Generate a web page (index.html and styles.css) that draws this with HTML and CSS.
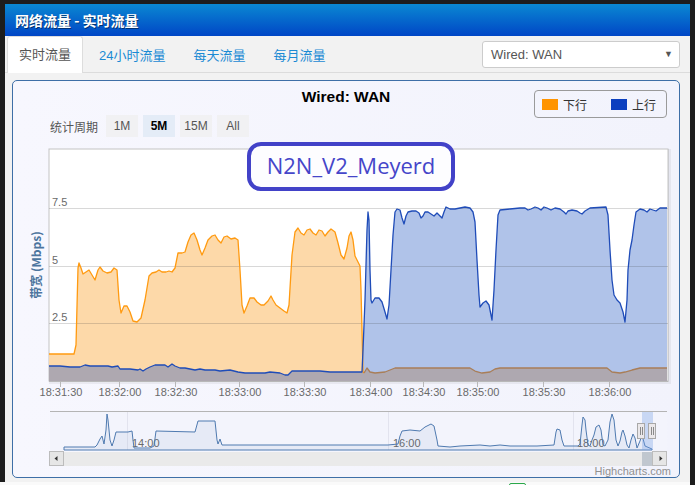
FILE: index.html
```html
<!DOCTYPE html>
<html lang="zh-CN">
<head>
<meta charset="utf-8">
<title>网络流量 - 实时流量</title>
<link rel="stylesheet" href="styles.css">
</head>
<body>
<div class="panel">
  <div class="header">网络流量 - 实时流量</div>
  <div class="tabbar">
    <div class="tab active">实时流量</div>
    <div class="tab">24小时流量</div>
    <div class="tab">每天流量</div>
    <div class="tab">每月流量</div>
    <div class="select"><span>Wired: WAN</span><span class="caret">▼</span></div>
  </div>
  <div class="chartbox">
    <div class="chart-top">
      <div></div>
      <div class="chart-title">Wired: WAN</div>
      <div class="legend">
        <span class="sw sw-down"></span><span class="lg-text">下行</span>
        <span class="sw sw-up"></span><span class="lg-text">上行</span>
      </div>
    </div>
    <div class="period">
      <span class="period-label">统计周期</span>
      <span class="pbtn">1M</span>
      <span class="pbtn sel">5M</span>
      <span class="pbtn">15M</span>
      <span class="pbtn">All</span>
    </div>
    <svg class="plot" width="666" height="340" viewBox="0 0 666 340" xmlns="http://www.w3.org/2000/svg">
      <g transform="translate(-13,-137)">
        <!-- plot shadow -->
        <rect x="50.5" y="150.5" width="619" height="232" fill="none" stroke="rgba(0,0,0,0.05)" stroke-width="3"/>
        <rect x="49.5" y="149.5" width="619" height="232" fill="none" stroke="rgba(0,0,0,0.08)" stroke-width="1"/>
        <rect x="49" y="149" width="619" height="232" fill="#ffffff" stroke="#c4c4c4" stroke-width="1"/>
        <!-- areas -->
        <path fill="#fdd9a9" d="M49,381 L49,354 L74,354 L76,345 L78,268 L79,263 L81,268 L83,274 L86,272 L89,270 L92,275 L95,280 L98,270 L100,267 L103,271 L107,273 L111,272 L114,268 L117,270 L119,300 L121,313 L124,306 L127,306 L130,312 L133,321 L137,322 L141,318 L145,300 L149,276 L152,273 L156,272 L159,270 L162,272 L166,272 L169,271 L172,272 L175,268 L178,253 L182,253 L185,252 L188,242 L191,235 L194,233 L197,240 L200,250 L202,255 L205,248 L208,240 L212,236 L215,235 L218,240 L221,243 L224,237 L227,236 L231,239 L235,238 L238,240 L240,270 L242,305 L244,313 L247,306 L250,298 L254,298 L257,302 L261,305 L264,305 L268,301 L271,296 L273,300 L276,305 L280,308 L284,311 L287,313 L289,305 L292,255 L295,232 L298,228 L301,233 L304,235 L307,230 L310,229 L313,233 L316,235 L319,230 L322,231 L325,236 L328,232 L331,229 L335,232 L338,243 L341,255 L344,259 L347,248 L349,236 L351,232 L353,240 L355,256 L358,262 L360,266 L361,290 L362,330 L363,372 L364,381 Z"/>
        <path fill="#b0c3e9" d="M362,381 L362,372 L363,350 L365,300 L367,230 L368,212 L369,220 L370,270 L371,300 L372,303 L375,298 L379,298 L382,302 L385,312 L387,319 L389,305 L391,270 L393,235 L395,212 L397,209 L400,210 L402,218 L404,224 L406,216 L408,212 L412,211 L416,211 L419,213 L421,218 L423,216 L425,212 L428,212 L431,214 L434,216 L437,213 L440,216 L442,218 L444,212 L446,207 L450,209 L455,209 L460,208 L465,207 L470,208 L473,212 L475,222 L477,260 L479,295 L480,307 L483,303 L486,301 L489,305 L491,315 L492,320 L494,290 L496,250 L498,215 L500,210 L510,209 L520,208 L525,208 L528,210 L531,209 L535,207 L538,208 L541,210 L544,207 L547,208 L551,210 L555,208 L560,209 L564,212 L566,214 L568,211 L572,210 L577,211 L580,213 L582,214 L585,211 L590,208 L606,207 L608,215 L610,250 L612,280 L614,295 L617,300 L620,303 L623,312 L625,322 L627,300 L628,270 L630,250 L632,240 L634,225 L636,212 L640,209 L644,210 L647,212 L650,209 L653,210 L656,211 L660,208 L663,208 L667,208 L667,381 Z"/>
        <path fill="#aea8b0" d="M49,381 L49,366 L60,366 L70,367 L80,367 L85,365 L90,366 L100,366 L108,366 L112,367 L118,366 L120,369 L125,369 L130,369 L138,370 L140,369 L143,371 L146,369 L150,367 L155,365 L160,365 L165,365 L168,367 L172,364 L175,366 L180,368 L185,368 L190,369 L195,370 L200,369 L205,370 L215,370 L220,371 L230,370 L238,372 L245,373 L265,373 L270,372 L280,373 L285,375 L288,375 L292,371 L320,371 L330,372 L362,372 L364,373 L367,368 L370,372 L375,373 L385,372 L390,370 L395,368 L470,368 L475,371 L482,373 L490,372 L495,369 L500,368 L607,368 L612,372 L620,373 L625,372 L632,370 L640,368 L667,368 L667,381 Z"/>
        <!-- grid -->
        <g stroke="rgba(60,60,60,0.2)" stroke-width="1">
          <line x1="49" y1="208.5" x2="668" y2="208.5"/>
          <line x1="49" y1="266.5" x2="668" y2="266.5"/>
          <line x1="49" y1="323.5" x2="668" y2="323.5"/>
        </g>
        <!-- lines -->
        <path fill="none" stroke="#ff9a10" stroke-width="1.3" stroke-linejoin="round" d="M49,354 L74,354 L76,345 L78,268 L79,263 L81,268 L83,274 L86,272 L89,270 L92,275 L95,280 L98,270 L100,267 L103,271 L107,273 L111,272 L114,268 L117,270 L119,300 L121,313 L124,306 L127,306 L130,312 L133,321 L137,322 L141,318 L145,300 L149,276 L152,273 L156,272 L159,270 L162,272 L166,272 L169,271 L172,272 L175,268 L178,253 L182,253 L185,252 L188,242 L191,235 L194,233 L197,240 L200,250 L202,255 L205,248 L208,240 L212,236 L215,235 L218,240 L221,243 L224,237 L227,236 L231,239 L235,238 L238,240 L240,270 L242,305 L244,313 L247,306 L250,298 L254,298 L257,302 L261,305 L264,305 L268,301 L271,296 L273,300 L276,305 L280,308 L284,311 L287,313 L289,305 L292,255 L295,232 L298,228 L301,233 L304,235 L307,230 L310,229 L313,233 L316,235 L319,230 L322,231 L325,236 L328,232 L331,229 L335,232 L338,243 L341,255 L344,259 L347,248 L349,236 L351,232 L353,240 L355,256 L358,262 L360,266 L361,290 L362,330 L363,372 L364,373"/>
        <path fill="none" stroke="#a97e58" stroke-width="1.3" stroke-linejoin="round" d="M364,373 L367,368 L370,372 L375,373 L385,372 L390,370 L395,368 L470,368 L475,371 L482,373 L490,372 L495,369 L500,368 L607,368 L612,372 L620,373 L625,372 L632,370 L640,368 L667,368"/>
        <path fill="none" stroke="#1f4cb8" stroke-width="1.3" stroke-linejoin="round" d="M49,366 L60,366 L70,367 L80,367 L85,365 L90,366 L100,366 L108,366 L112,367 L118,366 L120,369 L125,369 L130,369 L138,370 L140,369 L143,371 L146,369 L150,367 L155,365 L160,365 L165,365 L168,367 L172,364 L175,366 L180,368 L185,368 L190,369 L195,370 L200,369 L205,370 L215,370 L220,371 L230,370 L238,372 L245,373 L265,373 L270,372 L280,373 L285,375 L288,375 L292,371 L320,371 L330,372 L362,372 L363,350 L365,300 L367,230 L368,212 L369,220 L370,270 L371,300 L372,303 L375,298 L379,298 L382,302 L385,312 L387,319 L389,305 L391,270 L393,235 L395,212 L397,209 L400,210 L402,218 L404,224 L406,216 L408,212 L412,211 L416,211 L419,213 L421,218 L423,216 L425,212 L428,212 L431,214 L434,216 L437,213 L440,216 L442,218 L444,212 L446,207 L450,209 L455,209 L460,208 L465,207 L470,208 L473,212 L475,222 L477,260 L479,295 L480,307 L483,303 L486,301 L489,305 L491,315 L492,320 L494,290 L496,250 L498,215 L500,210 L510,209 L520,208 L525,208 L528,210 L531,209 L535,207 L538,208 L541,210 L544,207 L547,208 L551,210 L555,208 L560,209 L564,212 L566,214 L568,211 L572,210 L577,211 L580,213 L582,214 L585,211 L590,208 L606,207 L608,215 L610,250 L612,280 L614,295 L617,300 L620,303 L623,312 L625,322 L627,300 L628,270 L630,250 L632,240 L634,225 L636,212 L640,209 L644,210 L647,212 L650,209 L653,210 L656,211 L660,208 L663,208 L667,208"/>
        <!-- axis -->
        <line x1="49" y1="381.5" x2="668" y2="381.5" stroke="#b8b8b8"/>
        <g stroke="#b8b8b8">
          <line x1="60.5" y1="382" x2="60.5" y2="387"/>
          <line x1="119.5" y1="382" x2="119.5" y2="387"/>
          <line x1="175.5" y1="382" x2="175.5" y2="387"/>
          <line x1="239.5" y1="382" x2="239.5" y2="387"/>
          <line x1="304.5" y1="382" x2="304.5" y2="387"/>
          <line x1="370.5" y1="382" x2="370.5" y2="387"/>
          <line x1="423.5" y1="382" x2="423.5" y2="387"/>
          <line x1="477.5" y1="382" x2="477.5" y2="387"/>
          <line x1="543.5" y1="382" x2="543.5" y2="387"/>
          <line x1="609.5" y1="382" x2="609.5" y2="387"/>
        </g>
        <g class="xlab" text-anchor="middle">
          <text x="61" y="396">18:31:30</text>
          <text x="120" y="396">18:32:00</text>
          <text x="176" y="396">18:32:30</text>
          <text x="240" y="396">18:33:00</text>
          <text x="305" y="396">18:33:30</text>
          <text x="371" y="396">18:34:00</text>
          <text x="424" y="396">18:34:30</text>
          <text x="478" y="396">18:35:00</text>
          <text x="544" y="396">18:35:30</text>
          <text x="610" y="396">18:36:00</text>
        </g>
        <g class="ylab">
          <text x="52" y="206">7.5</text>
          <text x="52" y="264">5</text>
          <text x="52" y="321">2.5</text>
        </g>
        <text class="ytitle" transform="translate(41,265) rotate(-90)" text-anchor="middle">带宽 (Mbps)</text>
        <!-- navigator -->
        <rect x="50" y="412" width="617" height="38" fill="#f3f4fc"/>
        <g stroke="#e2e3ee">
          <line x1="127.5" y1="412" x2="127.5" y2="450"/>
          <line x1="388.5" y1="412" x2="388.5" y2="450"/>
          <line x1="573.5" y1="412" x2="573.5" y2="450"/>
        </g>
        <g class="navlab">
          <text x="132" y="447">14:00</text>
          <text x="393" y="447">16:00</text>
          <text x="577" y="447">18:00</text>
        </g>
        <path fill="rgba(69,114,167,0.07)" stroke="#4f7ab0" stroke-width="1" stroke-linejoin="round" d="M64,450 L64,447 L95,447 L97,445 L100,439 L102,436 L104,444 L106,430 L107,414 L108,420 L110,440 L112,446 L114,440 L116,432 L128,432 L132,431 L133,440 L134,448 L150,448 L154,446 L156,431 L195,432 L198,421 L215,421 L217,440 L218,444 L220,439 L222,445 L388,445 L398,444 L400,436 L402,431 L410,430 L420,431 L425,427 L431,424 L434,426 L437,440 L438,446 L450,447 L460,446 L480,445 L490,446 L500,445 L510,446 L537,446 L554,445 L556,432 L557,429 L560,430 L562,440 L564,446 L578,446 L580,444 L582,425 L583,417 L585,420 L586,430 L588,445 L590,446 L592,440 L594,435 L596,427 L599,425 L601,430 L603,445 L605,446 L608,440 L610,422 L612,414 L614,420 L616,440 L618,446 L620,441 L622,432 L623,430 L625,436 L627,445 L629,448 L631,440 L633,434 L635,438 L637,448 L640,441 L642,435 L645,446 L652,449 L652,450 Z"/>
        <line x1="50" y1="411.5" x2="667" y2="411.5" stroke="#b4b4b4"/>
        <rect x="642" y="412" width="11" height="38" fill="rgba(120,160,230,0.35)"/>
        <g fill="#ebe8ea" stroke="#a8a8a8">
          <rect x="637.5" y="423.5" width="7" height="15"/>
          <rect x="648.5" y="423.5" width="7" height="15"/>
        </g>
        <g stroke="#8a8a8a">
          <line x1="640.5" y1="427" x2="640.5" y2="435"/>
          <line x1="642.5" y1="427" x2="642.5" y2="435"/>
          <line x1="651.5" y1="427" x2="651.5" y2="435"/>
          <line x1="653.5" y1="427" x2="653.5" y2="435"/>
        </g>
        <!-- scrollbar -->
        <rect x="63" y="452" width="590" height="14" fill="#eaeaea"/>
        <rect x="642" y="452" width="11" height="14" fill="#c0c7cf"/>
        <rect x="49.5" y="451.5" width="14" height="14" fill="#e6e6e6" stroke="#bcbcbc"/>
        <rect x="652.5" y="451.5" width="14" height="14" fill="#e6e6e6" stroke="#bcbcbc"/>
        <path d="M54.5,458.5 L57.5,456 L57.5,461 Z" fill="#333"/>
        <path d="M659.5,456 L662.5,458.5 L659.5,461 Z" fill="#333"/>
        <text class="credits" x="671" y="475" text-anchor="end">Highcharts.com</text>
      </g>
    </svg>
    <div class="note">N2N_V2_Meyerd</div>
  </div>
</div>
<div class="footer"><span class="fbox"></span></div>
</body>
</html>
```
FILE: styles.css
```css
html, body {
  margin: 0;
  padding: 0;
}
body {
  background: #1d1d1d;
  font-family: "Liberation Sans", "Noto Sans CJK SC", sans-serif;
  width: 695px;
  height: 485px;
  overflow: hidden;
}
.panel {
  margin: 4px 0 0 5px;
  width: 685px;
  height: 478px;
  box-sizing: border-box;
  background: #f2f2f2;
}
.header {
  height: 32px;
  line-height: 32px;
  padding-left: 10px;
  background: linear-gradient(#0a88d2, #0046c6);
  color: #fff;
  font-size: 14px;
  font-weight: bold;
  text-shadow: 1px 1px 0 rgba(0, 0, 0, 0.45);
  font-family: "Noto Sans CJK SC", sans-serif;
}
.tabbar {
  height: 36px;
  display: flex;
  align-items: flex-end;
  padding-left: 2px;
  border-bottom: 1px solid #dcdcdc;
}
.tab {
  height: 36px;
  line-height: 36px;
  padding: 0 11px;
  margin-right: 4px;
  margin-bottom: -1px;
  font-size: 13px;
  color: #1a8ad4;
  border: 1px solid transparent;
  border-bottom: none;
  box-sizing: border-box;
}
.tab.active {
  background: #fff;
  color: #555;
  border-color: #ddd;
  border-radius: 3px 3px 0 0;
  height: 37px;
}
.select {
  margin-left: auto;
  margin-right: 10px;
  align-self: center;
  width: 198px;
  height: 27px;
  box-sizing: border-box;
  background: #fff;
  border: 1px solid #ccc;
  border-radius: 3px;
  display: flex;
  align-items: center;
  justify-content: space-between;
  padding: 0 6px 0 8px;
  font-size: 13px;
  color: #555;
}
.caret {
  font-size: 9px;
  color: #555;
}
.chartbox {
  position: relative;
  margin: 7px 10px 0 7px;
  height: 398px;
  box-sizing: border-box;
  border: 1px solid #3e6fa7;
  border-radius: 5px;
  background: linear-gradient(90deg, #f7f7fe, #f2f3fc);
}
.chart-top {
  height: 34px;
  display: grid;
  grid-template-columns: 1fr auto 1fr;
}
.chart-title {
  margin-top: 7px;
  line-height: 18px;
  font-size: 15.5px;
  font-weight: bold;
  color: #000;
}
.legend {
  justify-self: end;
  margin: 9px 12px 0 0;
  height: 28px;
  box-sizing: border-box;
  border: 1px solid #9a9a9a;
  border-radius: 4px;
  display: flex;
  align-items: center;
  padding: 0 10px 0 7px;
  font-size: 12px;
  color: #333;
  font-family: "Noto Sans CJK SC", sans-serif;
  position: relative;
  z-index: 1;
}
.sw {
  width: 16px;
  height: 11px;
  margin-right: 5px;
}
.sw-down { background: #ff9400; }
.sw-up { background: #0b3fbf; }
.lg-text { margin-right: 24px; }
.lg-text:last-child { margin-right: 0; }
.period {
  height: 22px;
  display: flex;
  align-items: center;
  padding-left: 37px;
  font-size: 12px;
}
.period-label {
  color: #555;
  margin-right: 8px;
  font-family: "Noto Sans CJK SC", sans-serif;
}
.pbtn {
  width: 32px;
  height: 22px;
  line-height: 22px;
  text-align: center;
  margin-right: 5px;
  background: #f1f1f3;
  color: #555;
}
.pbtn.sel {
  background: #e4ecf7;
  color: #000;
  font-weight: bold;
}
.plot {
  display: block;
}
.plot text {
  font-family: "Liberation Sans", sans-serif;
  font-size: 11px;
}
.xlab text, .ylab text, .navlab text {
  fill: #6a6a6a;
}
.plot .ytitle {
  fill: #4d759e;
  font-weight: bold;
  font-size: 12px;
  font-family: "Noto Sans CJK SC", "Liberation Sans", sans-serif;
}
.credits {
  fill: #909090;
}
.note {
  position: absolute;
  left: 234px;
  top: 61px;
  width: 208px;
  height: 49px;
  box-sizing: border-box;
  border: 4px solid #4242c8;
  border-radius: 14px;
  background: #fdfdff;
  color: #4545c9;
  font-family: "Open Sans", sans-serif;
  font-size: 22px;
  display: flex;
  align-items: center;
  justify-content: center;
  padding-bottom: 3px;
}
.footer {
  width: 690px;
  height: 7px;
  background: #fafafa;
  position: relative;
}
.fbox {
  position: absolute;
  left: 509px;
  top: 1px;
  width: 15px;
  height: 8px;
  border: 1px solid #2aa84a;
  border-radius: 2px;
}
```
